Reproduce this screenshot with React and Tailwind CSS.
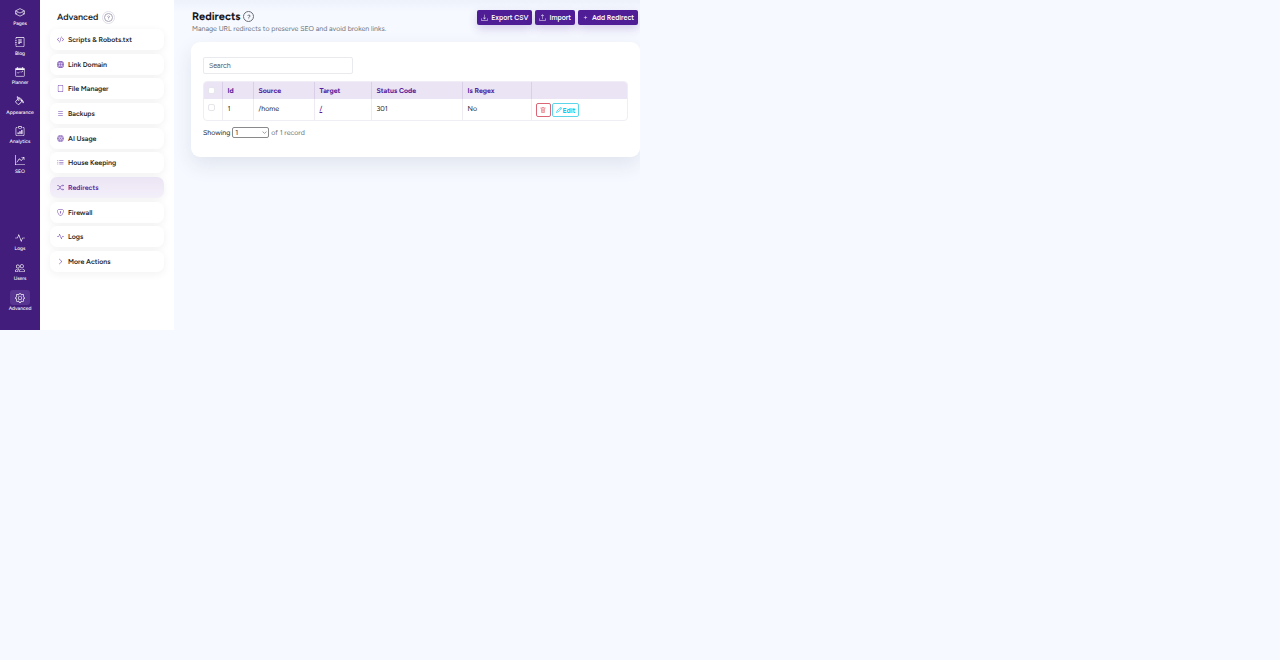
import { useState } from 'react';
import clsx from 'clsx';
import {
    BsActivity,
    BsChevronDown,
    BsChevronRight,
    BsClipboardData,
    BsCodeSlash,
    BsDownload,
    BsFile,
    BsGear,
    BsGlobe,
    BsGraphUpArrow,
    BsJournalText,
    BsList,
    BsListUl,
    BsPaintBucket,
    BsPencil,
    BsPeople,
    BsPlus,
    BsQuestionLg,
    BsShieldLock,
    BsShuffle,
    BsTrash,
    BsUpload,
} from 'react-icons/bs';

const PagesIcon = ({ className }) => (
    <svg className={className} viewBox="0 0 16 16" fill="none" stroke="currentColor" strokeWidth="1.1" strokeLinejoin="round" aria-hidden="true">
        <path d="M8 1 15 4.500 8 8 1 4.500Z" />
        <path d="M1 4.500v5M15 4.500v5M1 9.500 8 13l7-3.500M1 9.500l3-2M15 9.500l-3-2" />
    </svg>
);

const PlannerIcon = ({ className }) => (
    <svg className={className} viewBox="0 0 16 16" fill="none" stroke="currentColor" aria-hidden="true">
        <rect x="1" y="2" width="14" height="13" rx="1" />
        <path d="M1 3.500h14" strokeWidth="2.500" />
        <path d="M4 0v3M12 0v3M3.500 8.500l1.500 1.500 2.500-2.500M9 8h2M12 6v2" />
    </svg>
);

const AiIcon = ({ className }) => (
    <svg className={className} viewBox="0 0 16 16" fill="none" stroke="currentColor" strokeWidth="1.3" aria-hidden="true">
        <circle cx="8" cy="8" r="7" />
        <circle cx="8" cy="8" r="4.500" />
        <path d="M5 1v3M11 1v3M1 8h2.500M12.500 8H15M5 15v-3M11 15v-3M6 10l2-4 2 4M6.500 9h3" />
    </svg>
);

const mainLinks = [
    { label: 'Pages', icon: PagesIcon },
    { label: 'Blog', icon: BsJournalText },
    { label: 'Planner', icon: PlannerIcon },
    { label: 'Appearance', icon: BsPaintBucket },
    { label: 'Analytics', icon: BsClipboardData },
    { label: 'SEO', icon: BsGraphUpArrow },
];

const bottomLinks = [
    { label: 'Logs', icon: BsActivity },
    { label: 'Users', icon: BsPeople },
    { label: 'Advanced', icon: BsGear, active: true },
];

const menuItems = [
    { label: 'Scripts & Robots.txt', icon: BsCodeSlash },
    { label: 'Link Domain', icon: BsGlobe },
    { label: 'File Manager', icon: BsFile },
    { label: 'Backups', icon: BsList },
    { label: 'AI Usage', icon: AiIcon },
    { label: 'House Keeping', icon: BsListUl },
    { label: 'Redirects', icon: BsShuffle, active: true },
    { label: 'Firewall', icon: BsShieldLock },
    { label: 'Logs', icon: BsActivity },
    { label: 'More Actions', icon: BsChevronRight },
];

const columns = [
    { label: 'Id', width: 'w-[31px]' },
    { label: 'Source', width: 'w-[61px]' },
    { label: 'Target', width: 'w-[57px]' },
    { label: 'Status Code', width: 'w-[91px]' },
    { label: 'Is Regex', width: 'w-[69px]' },
    { label: '', width: '' },
];

const redirects = [{ id: 1, source: '/home', target: '/', status: 301, regex: 'No' }];

const RailLink = ({ label, icon: Icon, active }) => (
    <a href="#" className="flex flex-col items-center gap-px text-[5px] leading-[7px] font-medium text-white">
        <span className={clsx('flex h-[15px] w-5 items-center justify-center rounded-[3px]', active && 'bg-[#573591]')}>
            <Icon className="size-[10px]" />
        </span>
        {label}
    </a>
);

const MenuLink = ({ label, icon: Icon, active }) => (
    <a
        href="#"
        className={clsx(
            'flex h-[21px] items-center gap-1 rounded-[7px] px-[7px] text-[7px] leading-[9px] font-semibold shadow-[0_2px_8px_rgba(30,30,60,0.06)]',
            active ? 'bg-linear-to-b from-[#ebe4f4] to-[#f4f0fa] text-[#54209b]' : 'bg-white text-[#1d1d24]'
        )}
    >
        <Icon className="size-[7px] text-[#6a3bab]" />
        {label}
    </a>
);

const ActionButton = ({ label, icon: Icon }) => (
    <button
        type="button"
        className="flex h-[15px] items-center gap-[3px] rounded-[2px] bg-[#4f1d96] px-1 text-[7px] leading-[9px] font-semibold text-white shadow-[0_4px_10px_rgba(79,29,150,0.2)]"
    >
        <Icon className="size-[7px]" />
        {label}
    </button>
);

const CheckBox = ({ label }) => (
    <input
        type="checkbox"
        aria-label={label}
        className="block size-[7px] appearance-none rounded-[2px] border border-[#e6e6ea] bg-white checked:bg-[#4f1d96]"
    />
);

const App = () => {
    const [search, setSearch] = useState('');

    return (
        <div className="min-h-screen bg-[#f6f9ff] font-['Figtree','Inter',sans-serif] text-[#212529] [text-rendering:geometricPrecision]">
            <div className="flex min-h-[50vh] w-1/2 overflow-hidden">
                <nav className="flex w-10 shrink-0 flex-col justify-between bg-[#431d7c] pt-[5px] pb-[17px]">
                    <div className="flex h-[171px] flex-col justify-between">
                        {mainLinks.map((link) => <RailLink key={link.label} {...link} />)}
                    </div>
                    <div className="flex h-[83px] flex-col justify-between">
                        {bottomLinks.map((link) => <RailLink key={link.label} {...link} />)}
                    </div>
                </nav>

                <aside className="w-[134px] shrink-0 bg-white px-[10px] pt-[11px]">
                    <div className="flex items-center gap-1 pl-[7px]">
                        <h2 className="text-[9px] leading-[12px] font-semibold">Advanced</h2>
                        <button type="button" aria-label="Help" className="flex size-[13px] items-center justify-center rounded-full border border-[#e2e0ea]">
                            <span className="flex size-[9px] items-center justify-center rounded-full border border-[#aaa6b8] text-[#6d6785]">
                                <BsQuestionLg className="size-[5px]" />
                            </span>
                        </button>
                    </div>
                    <div className="mt-[5px] flex h-[243px] flex-col justify-between">
                        {menuItems.map((item) => <MenuLink key={item.label} {...item} />)}
                    </div>
                </aside>

                <main className="min-w-0 flex-1 bg-linear-to-b from-[#edf2fb] to-[#f6f9ff] to-[12px] pt-[10px] pl-[17px]">
                    <header className="flex items-start justify-between pr-[2px] pl-px">
                        <div>
                            <div className="flex items-center gap-[3px]">
                                <h1 className="text-[11px] leading-[13px] font-bold text-[#16161c]">Redirects</h1>
                                <button type="button" aria-label="Help" className="flex size-[11px] items-center justify-center rounded-full border border-[#6b6f77] text-[#4b4f57]">
                                    <BsQuestionLg className="size-[6px]" />
                                </button>
                            </div>
                            <p className="mt-px text-[7px] leading-[9px] text-[#6c757d]">
                                Manage URL redirects to preserve SEO and avoid broken links.
                            </p>
                        </div>
                        <div className="flex gap-[3px]">
                            <ActionButton label="Export CSV" icon={BsDownload} />
                            <ActionButton label="Import" icon={BsUpload} />
                            <ActionButton label="Add Redirect" icon={BsPlus} />
                        </div>
                    </header>

                    <section className="mt-[9px] rounded-[9px] bg-white px-3 pt-[15px] pb-[19px] shadow-[0_8px_20px_rgba(40,50,90,0.1)]">
                        <input
                            type="text"
                            aria-label="Search"
                            placeholder="Search"
                            value={search}
                            onChange={(event) => setSearch(event.target.value)}
                            className="block h-[17px] w-[150px] rounded-[2px] border border-[#e8eaee] px-[5px] text-[7px] placeholder:text-[#4f535a]"
                        />

                        <div className="mt-[7px] overflow-hidden rounded-[4px] border border-[#f0eef4]">
                            <table className="w-full table-fixed border-collapse text-left text-[7px] leading-[9px]">
                                <thead className="bg-[#ebe4f5] text-[#54209b]">
                                    <tr className="h-[17px]">
                                        <th className="w-[18px] border-r border-[#d9d0e8] pl-1">
                                            <CheckBox label="Select all" />
                                        </th>
                                        {columns.map(({ label, width }) => (
                                            <th key={label} className={clsx('border-r border-[#d9d0e8] pl-[5px] font-bold last:border-r-0', width)}>
                                                {label}
                                            </th>
                                        ))}
                                    </tr>
                                </thead>
                                <tbody>
                                    {redirects.map((row) => (
                                        <tr key={row.id} className="h-[21px] align-top *:border-r *:border-[#eeebf3] *:pt-[5px] *:pl-[5px] *:first:pl-1 *:last:border-r-0 *:last:pt-1 *:last:pl-1">
                                            <td><CheckBox label={`Select row ${row.id}`} /></td>
                                            <td>{row.id}</td>
                                            <td>{row.source}</td>
                                            <td><a href="#" className="font-medium text-[#54209b] underline">{row.target}</a></td>
                                            <td>{row.status}</td>
                                            <td>{row.regex}</td>
                                            <td>
                                                <div className="flex gap-px">
                                                    <button type="button" aria-label="Delete" className="flex h-[14px] w-[15px] items-center justify-center rounded-[2px] border border-[#dc6575] text-[#dc3545]">
                                                        <BsTrash className="size-[6px]" />
                                                    </button>
                                                    <button type="button" className="flex h-[14px] items-center gap-px rounded-[2px] border border-[#5cd5ea] px-[3px] font-bold text-[#0dcaf0]">
                                                        <BsPencil className="size-[6px]" />
                                                        Edit
                                                    </button>
                                                </div>
                                            </td>
                                        </tr>
                                    ))}
                                </tbody>
                            </table>
                        </div>

                        <div className="mt-[6px] flex items-center gap-[2px] text-[7px] leading-[11px]">
                            <label htmlFor="page-size">Showing</label>
                            <span className="relative">
                                <select id="page-size" className="block h-[11px] w-[37px] appearance-none rounded-[2px] border border-[#8a8a8a] bg-white pl-[2px] leading-[9px]">
                                    <option>1</option>
                                </select>
                                <BsChevronDown className="pointer-events-none absolute top-[3px] right-[2px] size-[5px]" />
                            </span>
                            <span className="text-[#6c757d]">of 1 record</span>
                        </div>
                    </section>
                </main>
            </div>
        </div>
    );
};

export default App;
